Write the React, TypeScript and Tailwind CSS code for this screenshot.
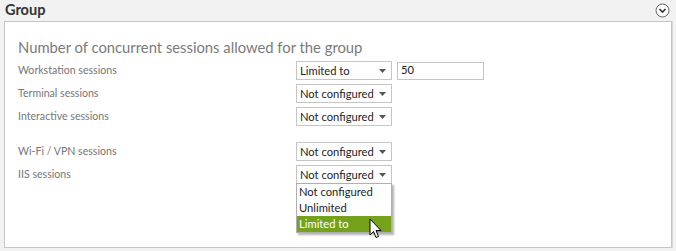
import React from "react";

const Select = ({ value, className = "" }: { value: string; className?: string }) => (
  <div
    className={`flex items-center justify-between h-[19px] w-[96px] border border-[#c5c5c5] bg-white pl-[3px] pr-[5px] text-[11.2px] text-[#222] whitespace-nowrap ${className}`}
  >
    <span className="leading-none">{value}</span>
    <svg width="7" height="4" viewBox="0 0 7 4">
      <path d="M0 0 H7 L3.5 4 Z" fill="#555" />
    </svg>
  </div>
);

const Row = ({ label, value, extra, className = "" }: { label: string; value: string; extra?: React.ReactNode; className?: string }) => (
  <div className={`flex items-center h-[23px] ${className}`}>
    <div className="w-[278px] text-[10.6px] text-[#767676] whitespace-nowrap">{label}</div>
    <Select value={value} />
    {extra}
  </div>
);

export default function App() {
  return (
    <div
      className="relative w-[676px] h-[251px] overflow-hidden bg-[#f2f2f2]"
      style={{ fontFamily: 'Lato, "Noto Sans", sans-serif' }}
    >
      <div className="flex items-center justify-between h-[21px] pl-[5px] pr-[6px]">
        <span className="text-[14.5px] font-bold text-[#333] leading-none">Group</span>
        <svg width="15" height="15" viewBox="0 0 15 15">
          <circle cx="7.5" cy="7.5" r="6.5" fill="#fff" stroke="#666" strokeWidth="1" />
          <path d="M4.5 6 L7.5 9 L10.5 6" fill="none" stroke="#333" strokeWidth="1.6" />
        </svg>
      </div>
      <div className="ml-[4px] w-[668px] h-[227px] border border-[#c6c6c6] bg-white pl-[13px] pt-[15px] shadow-[1px_0_0_#d8d8d8]">
        <div className="text-[14.8px] text-[#7a7a7a] leading-[20px] mb-[2px] whitespace-nowrap">
          Number of concurrent sessions allowed for the group
        </div>
        <Row
          label="Workstation sessions"
          value="Limited to"
          extra={
            <div className="ml-[5px] h-[18px] w-[87px] border border-[#c5c5c5] bg-white pl-[3px] text-[11.2px] text-[#222] flex items-center">
              50
            </div>
          }
        />
        <Row label="Terminal sessions" value="Not configured" />
        <Row label="Interactive sessions" value="Not configured" />
        <Row label="Wi-Fi / VPN sessions" value="Not configured" className="mt-[12px]" />
        <Row label="IIS sessions" value="Not configured" />
      </div>

      <div className="absolute left-[296px] top-[183px] w-[96px] border border-[#b0b0b0] bg-white text-[11.2px] text-[#222] shadow-[2px_2px_2px_rgba(0,0,0,0.3)]">
        <div className="h-[16px] pl-[2px] leading-[16px]">Not configured</div>
        <div className="h-[16px] pl-[2px] leading-[16px]">Unlimited</div>
        <div className="h-[16px] pl-[2px] leading-[16px] bg-[#74a21a] text-white">Limited to</div>
      </div>

      <svg className="absolute left-[369px] top-[218px]" width="14" height="22" viewBox="0 0 14 22">
        <path
          d="M1 1 L1 17 L4.5 13.5 L7 19.5 L9.5 18.5 L7 12.5 L12 12.5 Z"
          fill="#fff"
          stroke="#000"
          strokeWidth="1"
          strokeLinejoin="round"
        />
      </svg>
    </div>
  );
}
